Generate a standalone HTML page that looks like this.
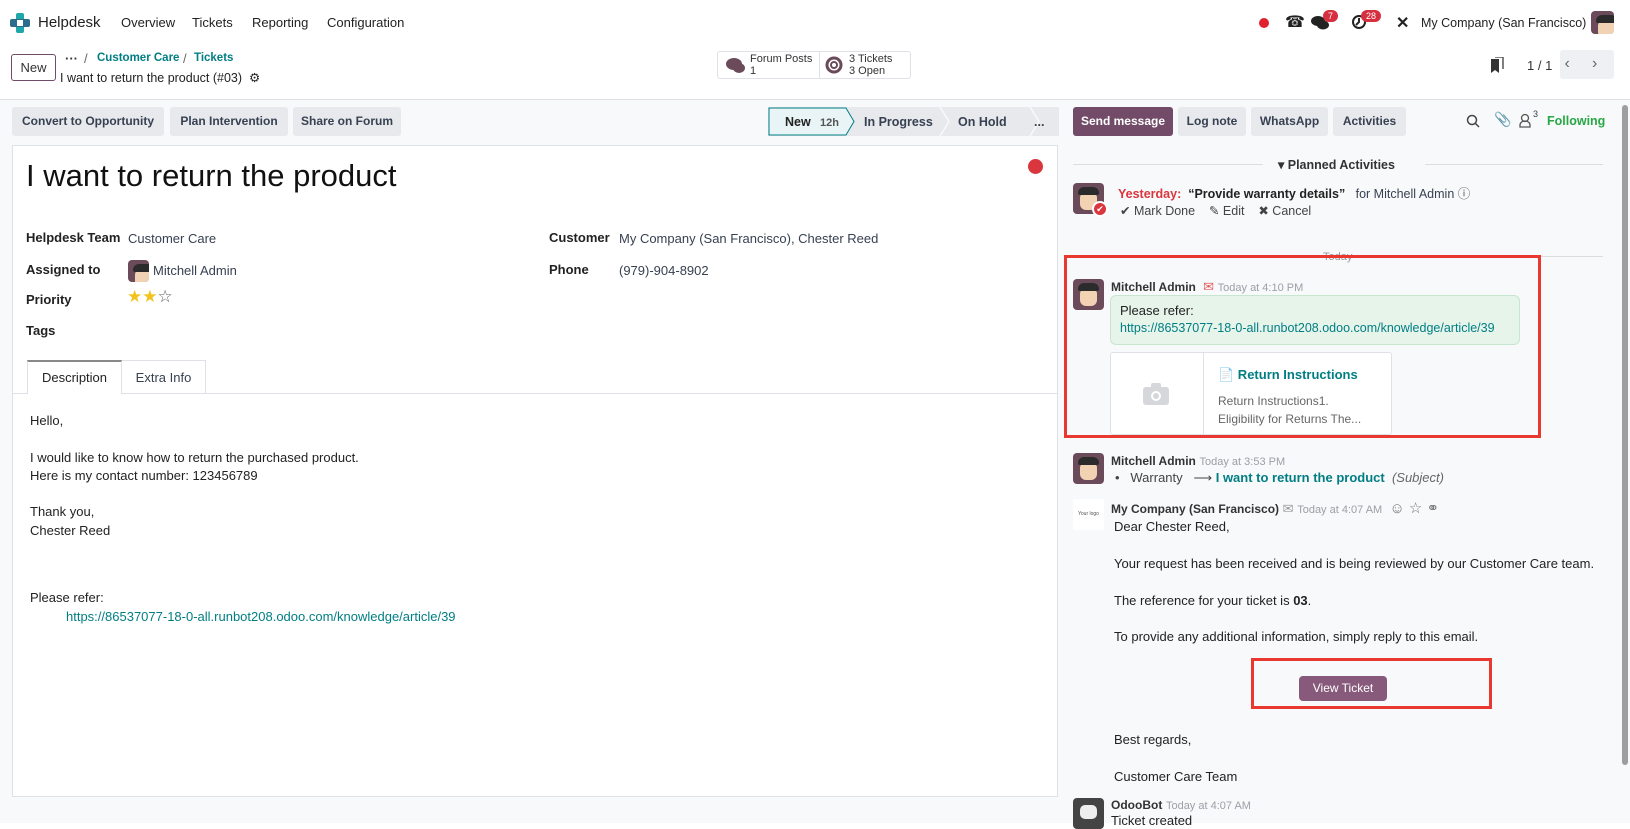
<!DOCTYPE html>
<html><head><meta charset="utf-8"><style>
*{box-sizing:border-box;margin:0;padding:0}
body{width:1630px;height:823px;overflow:hidden;background:#fff;font-family:"Liberation Sans",sans-serif;font-size:13px;color:#374151;position:relative}
.a{position:absolute;white-space:nowrap}
.teal{color:#017e84}
.btn{position:absolute;background:#e7e9ed;border-radius:3px;font-weight:bold;color:#374151;text-align:center;line-height:29px;height:29px;top:107px;font-size:12px}
.av{position:absolute;width:31px;height:31px;border-radius:4px;background:#6b4a5a;overflow:hidden}
.av:after{content:"";position:absolute;left:7px;top:9px;width:17px;height:18px;background:#f1d3b3;border-radius:6px}
.av:before{content:"";position:absolute;left:5px;top:4px;width:21px;height:8px;background:#2b2b2b;border-radius:6px 6px 2px 2px;z-index:1}
.b{font-weight:bold;color:#222}
.gray{color:#9aa0a6;font-size:11px}
</style></head><body>
<!-- nav -->
<svg class="a" style="left:10px;top:13px" width="20" height="20" viewBox="0 0 20 20"><rect x="6" y="0" width="8" height="20" rx="2" fill="#1ea6a8"/><rect x="0" y="6" width="20" height="8" rx="2" fill="#2c6e8a"/><rect x="7" y="7" width="6" height="6" fill="#fff"/></svg>
<div class="a" style="left:38px;top:14px;font-size:15px;color:#222">Helpdesk</div>
<div class="a" style="left:121px;top:15px;font-size:13px;color:#222">Overview</div>
<div class="a" style="left:192px;top:15px;font-size:13px;color:#222">Tickets</div>
<div class="a" style="left:252px;top:15px;font-size:13px;color:#222">Reporting</div>
<div class="a" style="left:327px;top:15px;font-size:13px;color:#222">Configuration</div>
<div class="a" style="left:1259px;top:18px;width:10px;height:10px;border-radius:50%;background:#e0232f"></div>
<div class="a" style="left:1285px;top:12px;font-size:16px;color:#222">☎</div>
<svg class="a" style="left:1311px;top:15px" width="18" height="16"><ellipse cx="7" cy="6" rx="7" ry="5" fill="#222"/><ellipse cx="12" cy="10" rx="6" ry="4.5" fill="#222"/></svg>
<div class="a" style="left:1323px;top:10px;background:#d62f3f;color:#fff;font-size:9px;border-radius:8px;padding:1px 5px">7</div>
<svg class="a" style="left:1351px;top:14px" width="16" height="16"><circle cx="8" cy="8" r="6" fill="none" stroke="#222" stroke-width="2"/><path d="M8 4v4l-3 3" stroke="#222" stroke-width="2" fill="none"/></svg>
<div class="a" style="left:1361px;top:10px;background:#d62f3f;color:#fff;font-size:9px;border-radius:8px;padding:1px 5px">28</div>
<div class="a" style="left:1396px;top:13px;font-size:16px;font-weight:bold;color:#222">✕</div>
<div class="a" style="left:1421px;top:16px;font-size:12.5px;color:#222">My Company (San Francisco)</div>
<div class="av" style="left:1591px;top:11px;width:23px;height:23px"></div>
<!-- row 2 -->
<div class="a" style="left:11px;top:54px;width:45px;height:27px;border:1px solid #714b67;border-radius:3px;text-align:center;line-height:25px;color:#333">New</div>
<div class="a" style="left:65px;top:51px;font-weight:bold;color:#333">···</div>
<div class="a" style="left:84px;top:51px;color:#666">/</div>
<div class="a b" style="left:97px;top:52px;color:#017e84;font-size:11.5px">Customer Care</div>
<div class="a" style="left:183px;top:51px;color:#666">/</div>
<div class="a b" style="left:194px;top:52px;color:#017e84;font-size:11.5px">Tickets</div>
<div class="a" style="left:60px;top:70px;color:#222;font-size:12.5px">I want to return the product (#03) &nbsp;⚙</div>
<div class="a" style="left:717px;top:51px;width:194px;height:28px;border:1px solid #dee2e6;border-radius:3px;background:#fff"></div>
<div class="a" style="left:819px;top:51px;width:1px;height:28px;background:#dee2e6"></div>
<svg class="a" style="left:726px;top:57px" width="20" height="17"><ellipse cx="8" cy="7" rx="8" ry="6" fill="#6b4a5a"/><ellipse cx="13" cy="11" rx="6" ry="5" fill="#6b4a5a"/></svg>
<div class="a" style="left:750px;top:53px;font-size:11px;line-height:12px;color:#333">Forum Posts<br>1</div>
<svg class="a" style="left:825px;top:56px" width="18" height="18"><circle cx="9" cy="9" r="7" fill="none" stroke="#6b4a5a" stroke-width="3"/><circle cx="9" cy="9" r="3" fill="none" stroke="#6b4a5a" stroke-width="2"/></svg>
<div class="a" style="left:849px;top:53px;font-size:11px;line-height:12px;color:#333">3 Tickets<br>3 Open</div>
<svg class="a" style="left:1490px;top:57px" width="14" height="16"><path d="M1 2h8v14l-4-3-4 3z" fill="#333"/><path d="M5 0h8v12" fill="none" stroke="#555" stroke-width="1.5"/></svg>
<div class="a" style="left:1527px;top:58px;color:#333">1 / 1</div>
<div class="a" style="left:1560px;top:50px;width:54px;height:29px;background:#eef0f3;border-radius:3px;color:#666;font-size:16px;line-height:27px">&nbsp;‹ &nbsp;&nbsp;&nbsp; ›</div>
<div class="a" style="left:0;top:99px;width:1630px;height:724px;background:#f8f9fa;border-top:1px solid #dee2e6"></div>
<!-- action bar -->
<div class="btn" style="left:12px;width:152px">Convert to Opportunity</div>
<div class="btn" style="left:170px;width:118px">Plan Intervention</div>
<div class="btn" style="left:293px;width:108px">Share on Forum</div>
<svg class="a" style="left:768px;top:107px" width="291" height="29">
<path d="M0 0H292V29H0Z" fill="#e7e9ed"/>
<path d="M1 1H78L86 14.5L78 28H1Z" fill="#e8f4f5" stroke="#017e84" stroke-width="1"/>
<path d="M172 0L181 14.5L172 29M262 0L271 14.5L262 29" fill="none" stroke="#f8f9fa" stroke-width="1.5"/>
<text x="17" y="19" font-family="Liberation Sans" font-size="12.5" font-weight="bold" fill="#222">New</text>
<text x="52" y="19" font-family="Liberation Sans" font-size="11" font-weight="bold" fill="#555">12h</text>
<text x="96" y="19" font-family="Liberation Sans" font-size="12.5" font-weight="bold" fill="#374151">In Progress</text>
<text x="190" y="19" font-family="Liberation Sans" font-size="12.5" font-weight="bold" fill="#374151">On Hold</text>
<text x="266" y="19" font-family="Liberation Sans" font-size="12.5" font-weight="bold" fill="#374151">...</text>
</svg>
<!-- form card -->
<div class="a" style="left:12px;top:145px;width:1046px;height:652px;background:#fff;border:1px solid #dee2e6"></div>
<div class="a" style="left:26px;top:158px;font-size:31px;color:#111">I want to return the product</div>
<div class="a" style="left:1028px;top:159px;width:15px;height:15px;border-radius:50%;background:#d9363e"></div>
<div class="a b" style="left:26px;top:230px">Helpdesk Team</div><div class="a" style="left:128px;top:231px">Customer Care</div>
<div class="a b" style="left:26px;top:262px">Assigned to</div>
<div class="av" style="left:128px;top:260px;width:21px;height:22px"></div>
<div class="a" style="left:153px;top:263px">Mitchell Admin</div>
<div class="a b" style="left:26px;top:292px">Priority</div>
<div class="a" style="left:127px;top:287px;font-size:17px;color:#f3c21c">★★<span style="color:#666">☆</span></div>
<div class="a b" style="left:26px;top:323px">Tags</div>
<div class="a b" style="left:549px;top:230px">Customer</div><div class="a" style="left:619px;top:231px">My Company (San Francisco), Chester Reed</div>
<div class="a b" style="left:549px;top:262px">Phone</div><div class="a" style="left:619px;top:263px">(979)-904-8902</div>
<div class="a" style="left:12px;top:393px;width:1046px;height:1px;background:#dee2e6"></div>
<div class="a" style="left:27px;top:360px;width:95px;height:34px;background:#fff;border:1px solid #dee2e6;border-bottom:none;border-top:2px solid #888;text-align:center;line-height:31px;color:#222">Description</div>
<div class="a" style="left:122px;top:360px;width:84px;height:33px;border:1px solid #dee2e6;border-left:none;border-bottom:none;text-align:center;line-height:33px">Extra Info</div>
<div class="a" style="left:30px;top:412px;line-height:18.3px;color:#222">Hello,<br><br>I would like to know how to return the purchased product.<br>Here is my contact number: 123456789<br><br>Thank you,<br>Chester Reed</div>
<div class="a" style="left:30px;top:590px;color:#222">Please refer:</div>
<div class="a teal" style="left:66px;top:609px">https://86537077-18-0-all.runbot208.odoo.com/knowledge/article/39</div>
<!-- chatter -->
<div class="a" style="left:1073px;top:107px;width:100px;height:29px;background:#714b67;color:#fff;border-radius:3px;font-weight:bold;text-align:center;line-height:29px;font-size:12px">Send message</div>
<div class="btn" style="left:1178px;width:68px">Log note</div>
<div class="btn" style="left:1251px;width:77px">WhatsApp</div>
<div class="btn" style="left:1333px;width:73px">Activities</div>
<svg class="a" style="left:1466px;top:114px" width="14" height="14"><circle cx="6" cy="6" r="4.5" fill="none" stroke="#444" stroke-width="1.5"/><path d="M9.5 9.5L13 13" stroke="#444" stroke-width="1.5"/></svg>
<div class="a" style="left:1494px;top:111px;font-size:14px;color:#444">📎</div>
<svg class="a" style="left:1519px;top:113px" width="12" height="15"><circle cx="6" cy="5" r="3.5" fill="none" stroke="#555" stroke-width="1.3"/><path d="M1 14v-2a5 4 0 0110 0v2z" fill="none" stroke="#555" stroke-width="1.3"/></svg>
<div class="a" style="left:1533px;top:109px;font-size:9px">3</div>
<div class="a" style="left:1547px;top:114px;font-weight:bold;color:#28a745;font-size:12.5px">Following</div>
<div class="a" style="left:1622px;top:105px;width:6px;height:660px;background:#9e9e9e;border-radius:3px"></div>
<div class="a" style="left:1073px;top:164px;width:190px;height:1px;background:#ddd"></div>
<div class="a" style="left:1425px;top:164px;width:178px;height:1px;background:#ddd"></div>
<div class="a b" style="left:1278px;top:157px;color:#333;font-size:12.5px">▾ Planned Activities</div>
<div class="av" style="left:1073px;top:183px"></div>
<div class="a" style="left:1092px;top:201px;width:16px;height:16px;border-radius:50%;background:#d9363e;border:2px solid #fff;color:#fff;font-size:9px;text-align:center;line-height:12px;z-index:2">✔</div>
<div class="a" style="left:1118px;top:183px;font-size:12.5px"><b style="color:#d9363e">Yesterday:</b> &nbsp;<b style="color:#222">“Provide warranty details”</b> &nbsp; for Mitchell Admin <span style="color:#555">ⓘ</span></div>
<div class="a" style="left:1120px;top:203px;color:#444;font-size:12.5px">✔ Mark Done &nbsp;&nbsp; ✎ Edit &nbsp;&nbsp; ✖ Cancel</div>
<div class="a" style="left:1360px;top:256px;width:243px;height:1px;background:#ddd"></div>
<div class="a" style="left:1323px;top:251px;color:#999;font-size:11px">Today</div>
<div class="av" style="left:1073px;top:279px"></div>
<div class="a" style="left:1111px;top:279px"><b style="color:#333;font-size:12px">Mitchell Admin</b> &nbsp;<span style="color:#e05a5a">✉</span> <span class="gray">Today at 4:10 PM</span></div>
<div class="a" style="left:1110px;top:295px;width:410px;height:50px;background:#e6f4ea;border:1px solid #c7e6cf;border-radius:6px"></div>
<div class="a" style="left:1120px;top:303px;color:#222">Please refer:</div>
<div class="a teal" style="left:1120px;top:321px;font-size:12.5px">https://86537077-18-0-all.runbot208.odoo.com/knowledge/article/39</div>
<div class="a" style="left:1110px;top:352px;width:282px;height:83px;background:#fff;border:1px solid #dee2e6;border-radius:3px"></div>
<div class="a" style="left:1203px;top:352px;width:1px;height:83px;background:#dee2e6"></div>
<svg class="a" style="left:1143px;top:383px" width="26" height="22"><rect x="0" y="4" width="26" height="18" rx="3" fill="#d5d7da"/><rect x="8" y="0" width="10" height="6" rx="2" fill="#d5d7da"/><circle cx="13" cy="13" r="5" fill="#fff"/><circle cx="13" cy="13" r="3" fill="#d5d7da"/></svg>
<div class="a b" style="left:1218px;top:367px;color:#017e84"><span style="color:#b8c7d9">📄</span> Return Instructions</div>
<div class="a" style="left:1218px;top:392px;line-height:18px;color:#666;font-size:12px">Return Instructions1.<br>Eligibility for Returns The...</div>
<div class="a" style="left:1064px;top:255px;width:477px;height:183px;border:3px solid #e8382f"></div>
<div class="av" style="left:1073px;top:453px"></div>
<div class="a" style="left:1111px;top:453px"><b style="color:#333;font-size:12px">Mitchell Admin</b> <span class="gray">Today at 3:53 PM</span></div>
<div class="a" style="left:1115px;top:470px;color:#444">•&nbsp;&nbsp; Warranty &nbsp; ⟶ <b class="teal" style="color:#017e84">I want to return the product</b> &nbsp;<i style="color:#666">(Subject)</i></div>
<div class="a" style="left:1073px;top:499px;width:31px;height:31px;background:#fff;font-size:5px;color:#555;line-height:31px;text-align:center">Your logo</div>
<div class="a" style="left:1111px;top:499px"><b style="color:#333;font-size:12px">My Company (San Francisco)</b> <span style="color:#999">✉</span> <span class="gray">Today at 4:07 AM</span> &nbsp;<span style="color:#777;font-size:15px">☺ ☆ ⚭</span></div>
<div class="a" style="left:1114px;top:518px;color:#222;line-height:18px">Dear Chester Reed,</div>
<div class="a" style="left:1114px;top:556px;color:#222">Your request has been received and is being reviewed by our Customer Care team.</div>
<div class="a" style="left:1114px;top:593px;color:#222">The reference for your ticket is <b>03</b>.</div>
<div class="a" style="left:1114px;top:629px;color:#222">To provide any additional information, simply reply to this email.</div>
<div class="a" style="left:1299px;top:676px;width:88px;height:25px;background:#875a7b;color:#fff;border-radius:4px;text-align:center;line-height:25px;font-size:12px">View Ticket</div>
<div class="a" style="left:1251px;top:658px;width:241px;height:51px;border:3px solid #e8382f"></div>
<div class="a" style="left:1114px;top:732px;color:#222">Best regards,</div>
<div class="a" style="left:1114px;top:769px;color:#222">Customer Care Team</div>
<div class="a" style="left:1073px;top:798px;width:31px;height:31px;border-radius:4px;background:#444"><div style="margin:7px;width:17px;height:14px;background:#eee;border-radius:5px"></div></div>
<div class="a" style="left:1111px;top:797px"><b style="color:#333;font-size:12px">OdooBot</b> <span class="gray">Today at 4:07 AM</span></div>
<div class="a" style="left:1111px;top:813px;color:#222">Ticket created</div>
</body></html>
